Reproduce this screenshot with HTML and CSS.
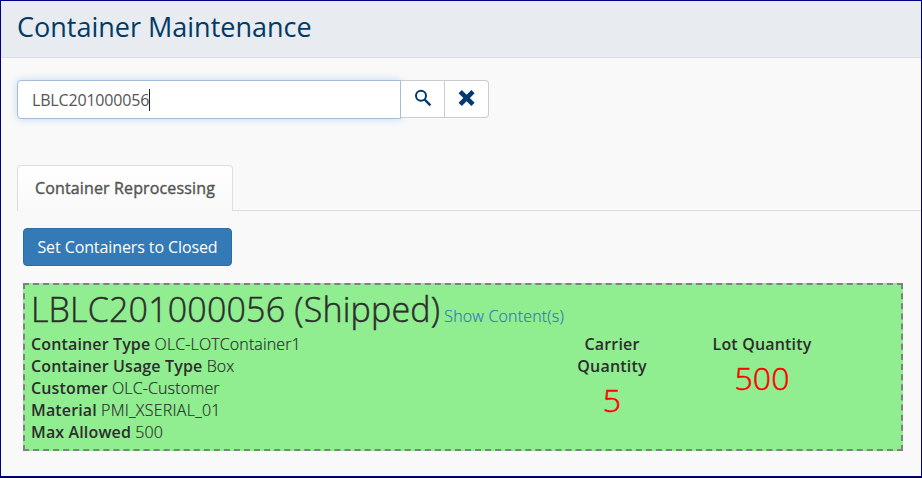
FILE: index.html
```html
<!DOCTYPE html>
<html lang="en">
<head>
<meta charset="utf-8">
<title>Container Maintenance</title>
<link rel="stylesheet" href="styles.css">
</head>
<body>
<div class="page">
  <header class="page-header"><h1>Container Maintenance</h1></header>
  <main class="content">
    <div class="search">
      <div class="search-field"><span>LBLC201000056</span><i class="caret"></i></div>
      <button class="search-btn" aria-label="Search">
        <svg width="18" height="18" viewBox="0 0 18 18" fill="none" stroke="#003a70"><circle cx="7" cy="6.8" r="5" stroke-width="2"/><path d="M10.7 10.6L16.4 16.4" stroke-width="2.3"/></svg>
      </button>
      <button class="search-btn search-btn-last" aria-label="Clear">
        <svg width="18" height="18" viewBox="0 0 18 18" fill="none" stroke="#003a70" stroke-width="4.6"><path d="M2.2 2.6L15 15.4M15 2.6L2.2 15.4"/></svg>
      </button>
    </div>
    <nav class="tabs"><a class="tab">Container Reprocessing</a><span class="tab-line"></span></nav>
    <button class="primary">Set Containers to Closed</button>
    <section class="card">
      <div class="card-head"><span class="card-title">LBLC201000056 (Shipped)</span> <a class="link">Show Content(s)</a></div>
      <div class="card-body">
        <div class="details">
          <div><b>Container Type</b> OLC-LOTContainer1</div>
          <div><b>Container Usage Type</b> Box</div>
          <div><b>Customer</b> OLC-Customer</div>
          <div><b>Material</b> <span class="material">PMI_XSERIAL_01</span></div>
          <div><b>Max Allowed</b> 500</div>
        </div>
        <div class="quantity"><b>Carrier Quantity</b><span class="number">5</span></div>
        <div class="quantity quantity-lot"><b>Lot Quantity</b><span class="number">500</span></div>
      </div>
    </section>
  </main>
</div>
</body>
</html>
```
FILE: styles.css
```css
* { box-sizing: border-box; }
body {
  margin: 0;
  height: 478px;
  border-bottom: 1px solid #000;
  font: 300 16px/22px "Open Sans", sans-serif;
  color: #2d2d2d;
  overflow: hidden;
}
.page { height: 477px; border: 1px solid #000080; background: #f9f9f9; }
.page-header {
  height: 57px;
  padding: 7px 0 0 16px;
  background: #e8ebf0;
  border-bottom: 1px solid #d9dee4;
}
h1 { margin: 0; font-size: 27px; line-height: 38px; font-weight: 400; color: #003a66; white-space: nowrap; }
.content { padding: 22px 0 0 16px; }
.search { display: flex; }
.search-field {
  display: flex;
  align-items: center;
  width: 384px;
  height: 39px;
  padding-left: 14px;
  background: #fff;
  border: 1px solid #a5bdd6;
  border-radius: 4px 0 0 4px;
  box-shadow: 0 0 8px rgba(102, 175, 233, .4);
  color: #555;
  font-weight: 400;
  letter-spacing: -.17px;
}
.caret { width: 1px; height: 22px; background: #222; }
.search-btn {
  display: flex;
  align-items: center;
  justify-content: center;
  width: 44px;
  height: 38px;
  padding: 0 0 2px;
  background: #fff;
  border: 1px solid #ccc;
  border-left: 0;
  position: relative;
}
.search-btn-last { border-radius: 0 4px 4px 0; }
.tabs { display: flex; align-items: flex-end; margin-top: 46px; }
.tab {
  width: 216px;
  height: 46px;
  padding: 11px 0 0 17px;
  border: 1px solid #ddd;
  border-bottom: 0;
  border-radius: 4px 4px 0 0;
  background: linear-gradient(#fff, #f9f9f9);
  color: #555;
  font-weight: 400;
  letter-spacing: .14px;
  -webkit-text-stroke-width: .4px;
  white-space: nowrap;
}
.tab-line { flex: 1; height: 1px; background: #ddd; }
.primary {
  display: block;
  width: 209px;
  height: 38px;
  margin: 17px 0 0 6px;
  padding: 0;
  background: #337ab7;
  border: 1px solid #2e6da4;
  border-radius: 4px;
  color: #fff;
  font: 400 16px/22px "Open Sans", sans-serif;
  letter-spacing: -.1px;
  white-space: nowrap;
}
.card {
  width: 880px;
  height: 168px;
  margin: 17px 0 0 6px;
  padding: 0 6px;
  background: #90ee90;
  border: 2px dashed gray;
  -webkit-text-stroke-width: .2px;
}
.card-head { height: 48px; line-height: 48px; white-space: nowrap; }
.card-title { font-size: 34px; letter-spacing: .18px; -webkit-text-stroke-width: .45px; }
.link { color: #337ab7; letter-spacing: .17px; }
b { font-weight: 600; letter-spacing: .14px; -webkit-text-stroke-width: 0; }
.card-body { display: flex; }
.details { width: 531px; letter-spacing: .12px; white-space: nowrap; }
.material { letter-spacing: .25px; }
.quantity { width: 100px; text-align: center; }
.quantity b, .number { display: block; }
.quantity b { letter-spacing: .18px; }
.quantity-lot { margin-left: 50px; }
.number { font-size: 32px; line-height: 46px; color: #f00; -webkit-text-stroke-width: .5px; }
```
